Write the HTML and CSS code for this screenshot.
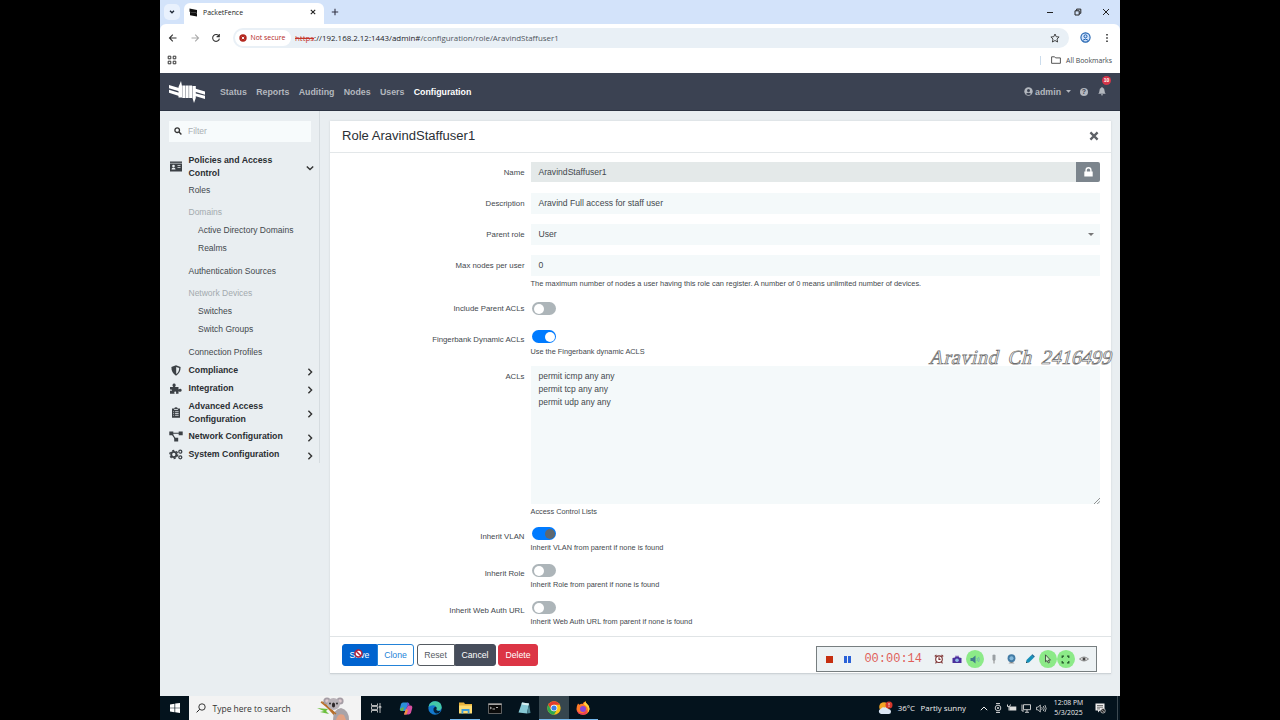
FILE: index.html
```html
<!DOCTYPE html>
<html lang="en">
<head>
  <meta charset="UTF-8">
  <meta name="viewport" content="width=device-width, initial-scale=1.0">
  <title>PacketFence</title>
  <link rel="stylesheet" href="styles.css">
</head>
<body>

<div class="screen">

  <!-- browser -->
  <div class="tabstrip">
    <div class="tab-search"><svg width="6" height="4" viewBox="0 0 6 4"><path d="M1 .8l2 2 2-2" fill="none" stroke="#1f2937" stroke-width="1.3"/></svg></div>
    <div class="tab">
      <svg width="9" height="9" viewBox="0 0 9 9"><path d="M.5.5L8 2v3L.5 3.8zM1 4l7 1.2v3.3L1 7.3z" fill="#111"/></svg>
      <span>PacketFence</span>
      <svg class="tab-close" width="6" height="6" viewBox="0 0 6 6"><path d="M.8.8l4.400 4.400M5.200.8L.8 5.200" stroke="#222" stroke-width="1.1"/></svg>
    </div>
    <svg class="new-tab" width="8" height="8" viewBox="0 0 8 8"><path d="M4 .8v6.400M.8 4h6.400" stroke="#334" stroke-width="1.1"/></svg>
    <div class="win-controls">
      <svg width="8" height="8" viewBox="0 0 8 8"><path d="M1 4.500h6" stroke="#222" stroke-width="1"/></svg>
      <svg width="8" height="8" viewBox="0 0 8 8"><path d="M1 2.800h4.200V7H1zM2.600 2.600V1.100h4.200v4.200H5.400" fill="none" stroke="#222" stroke-width="1"/></svg>
      <svg width="8" height="8" viewBox="0 0 8 8"><path d="M1 1l6 6M7 1L1 7" stroke="#222" stroke-width="1"/></svg>
    </div>
  </div>

  <div class="toolbar">
    <div class="nav-btns">
      <svg width="10" height="10" viewBox="0 0 10 10"><path d="M8.500 5h-7M4.800 1.700L1.500 5l3.300 3.300" fill="none" stroke="#333" stroke-width="1.1"/></svg>
      <svg width="10" height="10" viewBox="0 0 10 10"><path d="M1.500 5h7M5.200 1.700L8.500 5 5.200 8.300" fill="none" stroke="#aaa" stroke-width="1.1"/></svg>
      <svg width="10" height="10" viewBox="0 0 10 10"><path d="M8 3.200A3.400 3.400 0 1 0 8.400 5.600M8.300.9v2.700H5.600" fill="none" stroke="#333" stroke-width="1.1"/></svg>
    </div>
    <div class="omnibox">
      <div class="not-secure">
        <svg width="8" height="8" viewBox="0 0 8 8"><circle cx="4" cy="4" r="3.700" fill="#b3261e"/><path d="M2.800 2.800l2.400 2.400M5.200 2.800L2.800 5.200" stroke="#fff" stroke-width=".9"/></svg>
        <span>Not secure</span>
      </div>
      <div class="url"><s>https</s>://192.168.2.12:1443/admin#<span>/configuration/role/AravindStaffuser1</span></div>
      <svg class="star" width="10" height="10" viewBox="0 0 10 10"><path d="M5 1l1.200 2.700 2.900.3L7 6l.6 3L5 7.500 2.400 9 3 6 .9 4l2.900-.3z" fill="none" stroke="#333" stroke-width=".9"/></svg>
    </div>
    <svg class="profile" width="11" height="11" viewBox="0 0 11 11"><circle cx="5.500" cy="5.500" r="4.600" fill="#d3e3fb" stroke="#1b5fae" stroke-width="1.1"/><circle cx="5.500" cy="4.300" r="1.500" fill="none" stroke="#1b5fae"/><path d="M2.600 8.400q2.900-2.600 5.800 0" fill="none" stroke="#1b5fae"/></svg>
    <svg class="kebab" width="4" height="10" viewBox="0 0 4 10"><path d="M1.200 1h1.600v1.600H1.200zM1.200 4.200h1.600v1.600H1.200zM1.200 7.400h1.600V9H1.200z" fill="#333"/></svg>
  </div>

  <div class="bookmarks">
    <svg width="10" height="10" viewBox="0 0 10 10"><path d="M1.200 1.200h2.600v2.600H1.200zM6.200 1.200h2.600v2.600H6.200zM1.200 6.200h2.600v2.600H1.200zM6.200 6.200h2.600v2.600H6.200z" fill="none" stroke="#333"/></svg>
    <div class="all-bookmarks">
      <svg width="10" height="8" viewBox="0 0 10 8"><path d="M.6.8h3l1 1.100h4.800v5.400H.6z" fill="none" stroke="#444" stroke-width=".9"/></svg>
      <span>All Bookmarks</span>
    </div>
  </div>

  <!-- packetfence admin -->
  <nav class="navbar">
    <svg class="brand" width="36" height="22" viewBox="0 0 36 22">
      <path d="M0 4l10 3v3.300L0 7.300zM0 8.700l10 3V15L0 11.700zM26 7.500l10 3v3.300l-10-3zM26 12.300l10 2.500V18l-10-3z" fill="#fff"/>
      <path d="M12 0l1 5v11.500H9.500V6zM13.300 4.500h3v12.500h-3zM16.700 4.500h3v12.500h-3zM20.100 4.500h3v12.500h-3zM23.500 5h3.300v12L25 22l-1.500-5z" fill="#fff"/>
    </svg>
    <a href="#">Status</a>
    <a href="#">Reports</a>
    <a href="#">Auditing</a>
    <a href="#">Nodes</a>
    <a href="#">Users</a>
    <a href="#" class="active">Configuration</a>
    <div class="nav-right">
      <svg width="9" height="9" viewBox="0 0 9 9"><circle cx="4.500" cy="4.500" r="4.200" fill="#b3b7be"/><circle cx="4.500" cy="3.500" r="1.500" fill="#3b4252"/><path d="M1.900 7q2.600-2.700 5.200 0-2.600 1.900-5.200 0" fill="#3b4252"/></svg>
      <span class="user">admin</span>
      <svg class="caret" width="5" height="3" viewBox="0 0 5 3"><path d="M0 0h5L2.500 2.800z" fill="#b3b7be"/></svg>
      <div class="help-icon">?</div>
      <div class="bell">
        <svg width="8" height="9" viewBox="0 0 8 9"><path d="M4 0q.7 0 .7.8Q6.600 1.300 6.600 4q0 1.700 1.100 2.700H.3Q1.400 5.700 1.400 4q0-2.700 1.900-3.200Q3.300 0 4 0zM3 7.300h2Q4.900 8.500 4 8.500T3 7.300z" fill="#b3b7be"/></svg>
        <span class="count">10</span>
      </div>
    </div>
  </nav>

  <div class="page">
    <aside class="sidebar">
      <div class="filter">
        <svg width="8" height="8" viewBox="0 0 8 8"><circle cx="3.200" cy="3.200" r="2.300" fill="none" stroke="#333" stroke-width="1.3"/><path d="M5 5l2.400 2.400" stroke="#333" stroke-width="1.4"/></svg>
        <span>Filter</span>
      </div>
      <div class="section tall first">
        <svg class="icon" width="13" height="11" viewBox="0 0 13 11"><path d="M.5.5h12v10H.5z" fill="#3c4146"/><path d="M.5 2.300h12" stroke="#e9eef1" stroke-width=".6"/><circle cx="4" cy="5" r="1.300" fill="#e9eef1"/><path d="M2 8.500q0-2 2-2t2 2zM8 4.200h3v.9H8zM8 6.200h3v.9H8z" fill="#e9eef1"/></svg>
        <span>Policies and Access Control</span>
        <svg class="chev" width="8" height="8" viewBox="0 0 8 8"><path d="M.8 2.400L4 5.600l3.200-3.200" fill="none" stroke="#333" stroke-width="1.4"/></svg>
      </div>
      <div class="item roles">Roles</div>
      <div class="item muted">Domains</div>
      <div class="item sub">Active Directory Domains</div>
      <div class="item sub">Realms</div>
      <div class="item spaced">Authentication Sources</div>
      <div class="item muted">Network Devices</div>
      <div class="item sub">Switches</div>
      <div class="item sub">Switch Groups</div>
      <div class="item spaced">Connection Profiles</div>
      <div class="section">
        <svg class="icon" width="11" height="11" viewBox="0 0 11 11"><path d="M5.500.3l4.600 1.800Q10.200 8 5.500 10.700.8 8 .9 2.100z" fill="#3c4146"/><path d="M5.700 1.900l3 1.100Q8.700 7 5.700 9z" fill="#e9eef1"/></svg>
        <span>Compliance</span>
        <svg class="chev" width="8" height="8" viewBox="0 0 8 8"><path d="M2.400.8L5.600 4 2.400 7.200" fill="none" stroke="#333" stroke-width="1.4"/></svg>
      </div>
      <div class="section">
        <svg class="icon" width="13" height="11" viewBox="0 0 13 11"><path d="M.5 4h3.200Q2.900 2.900 3 2 3.300.6 4.600.6T6.200 2q.1.900-.7 2H9v2.400q1-.7 2-.6 1.200.2 1.200 1.500T11 8.800q-1 .1-2-.6v2.500H6.300Q7 9.500 6.500 8.800 5.800 8 5 8.800q-.6.7.2 1.900H.5V7.500q1.500.6 2-.3 0-1.100-2-.6z" fill="#3c4146"/></svg>
        <span>Integration</span>
        <svg class="chev" width="8" height="8" viewBox="0 0 8 8"><path d="M2.400.8L5.600 4 2.400 7.200" fill="none" stroke="#333" stroke-width="1.4"/></svg>
      </div>
      <div class="section tall">
        <svg class="icon" width="9" height="11" viewBox="0 0 9 11"><path d="M.5 1.500h2.300Q3 .2 4.500.2t1.700 1.300h2.300v9.200h-8z" fill="#3c4146"/><path d="M2.600 2.500h3.800M3.600 4.700h3.500M3.600 6.500h3.500M3.600 8.300h3.500M1.800 4.700h.8M1.800 6.500h.8M1.800 8.300h.8" stroke="#e9eef1" stroke-width=".8"/></svg>
        <span>Advanced Access Configuration</span>
        <svg class="chev" width="8" height="8" viewBox="0 0 8 8"><path d="M2.400.8L5.600 4 2.400 7.200" fill="none" stroke="#333" stroke-width="1.4"/></svg>
      </div>
      <div class="section">
        <svg class="icon" width="14" height="11" viewBox="0 0 14 11"><path d="M.3.5h4v3.700h-4zM9.700.5h4v3.700h-4zM5.200 6.800h4v3.700h-4z" fill="#3c4146"/><path d="M4 2.300h6M3.300 3.400l3 4.500" stroke="#3c4146" stroke-width="1.1"/></svg>
        <span>Network Configuration</span>
        <svg class="chev" width="8" height="8" viewBox="0 0 8 8"><path d="M2.400.8L5.600 4 2.400 7.200" fill="none" stroke="#333" stroke-width="1.4"/></svg>
      </div>
      <div class="section last">
        <svg class="icon" width="14" height="11" viewBox="0 0 14 11"><circle cx="4.800" cy="5.500" r="2.600" fill="none" stroke="#3c4146" stroke-width="1.9"/><circle cx="4.800" cy="5.500" r="4" fill="none" stroke="#3c4146" stroke-width="1.3" stroke-dasharray="2.1 2.09"/><circle cx="11.300" cy="2.700" r="1.500" fill="none" stroke="#3c4146" stroke-width="1.3"/><circle cx="11.300" cy="8.300" r="1.500" fill="none" stroke="#3c4146" stroke-width="1.3"/></svg>
        <span>System Configuration</span>
        <svg class="chev" width="8" height="8" viewBox="0 0 8 8"><path d="M2.400.8L5.600 4 2.400 7.200" fill="none" stroke="#333" stroke-width="1.4"/></svg>
      </div>
    </aside>

    <main class="card">
      <header class="card-header">
        <h1>Role AravindStaffuser1</h1>
        <svg width="10" height="10" viewBox="0 0 10 10"><path d="M1.400 1.400l7.200 7.200M8.600 1.400L1.400 8.600" stroke="#5d6166" stroke-width="2.3"/></svg>
      </header>

      <div class="card-body">
        <div class="row">
          <label>Name</label>
          <div class="field group">
            <div class="input disabled">AravindStaffuser1</div>
            <div class="lock"><svg width="9" height="10" viewBox="0 0 9 10"><path d="M.3 4.500h8.400v5H.3z" fill="#fff"/><path d="M2.100 5V3.200a2.400 2.400 0 0 1 4.800 0V5" fill="none" stroke="#fff" stroke-width="1.4"/></svg></div>
          </div>
        </div>
        <div class="row">
          <label>Description</label>
          <div class="field"><div class="input">Aravind Full access for staff user</div></div>
        </div>
        <div class="row">
          <label>Parent role</label>
          <div class="field"><div class="input select">User<svg width="6" height="3" viewBox="0 0 6 3"><path d="M0 0h6L3 3z" fill="#777"/></svg></div></div>
        </div>
        <div class="row max">
          <label>Max nodes per user</label>
          <div class="field">
            <div class="input">0</div>
            <small class="long">The maximum number of nodes a user having this role can register. A number of 0 means unlimited number of devices.</small>
          </div>
        </div>
        <div class="row include">
          <label>Include Parent ACLs</label>
          <div class="field"><div class="toggle"></div></div>
        </div>
        <div class="row toggles">
          <label>Fingerbank Dynamic ACLs</label>
          <div class="field"><div class="toggle on"></div><small>Use the Fingerbank dynamic ACLS</small></div>
        </div>
        <div class="row acls">
          <label>ACLs</label>
          <div class="field">
            <div class="textarea">permit icmp any any<br>permit tcp any any<br>permit udp any any
              <svg class="grip" width="6" height="6" viewBox="0 0 6 6"><path d="M0 6l6-6M3.200 6L6 3.200" stroke="#777" stroke-width=".8"/></svg>
            </div>
            <small>Access Control Lists</small>
          </div>
        </div>
        <div class="row toggles">
          <label>Inherit VLAN</label>
          <div class="field"><div class="toggle on dark"></div><small>Inherit VLAN from parent if none is found</small></div>
        </div>
        <div class="row toggles">
          <label>Inherit Role</label>
          <div class="field"><div class="toggle"></div><small>Inherit Role from parent if none is found</small></div>
        </div>
        <div class="row toggles">
          <label>Inherit Web Auth URL</label>
          <div class="field"><div class="toggle"></div><small>Inherit Web Auth URL from parent if none is found</small></div>
        </div>
      </div>

      <footer class="card-footer">
        <div class="btn-group">
          <div class="btn save">Save
            <svg class="cursor" width="9" height="9" viewBox="0 0 9 9"><circle cx="4.500" cy="4.500" r="3.500" fill="#fff" stroke="#b3223a" stroke-width="1.5"/><path d="M2 2l5 5" stroke="#b3223a" stroke-width="1.5"/></svg>
          </div>
          <div class="btn clone">Clone</div>
        </div>
        <div class="btn-group">
          <div class="btn reset">Reset</div>
          <div class="btn cancel">Cancel</div>
        </div>
        <div class="btn delete">Delete</div>
      </footer>
    </main>
  </div>

  <!-- windows taskbar -->
  <div class="taskbar">
    <div class="start"><svg width="10" height="10" viewBox="0 0 10 10"><path d="M0 1.400l4.500-.7v4H0zM5.200.6L10 0v4.700H5.200zM0 5.300h4.500v4L0 8.600zM5.200 5.300H10V10l-4.800-.7z" fill="#fff"/></svg></div>
    <div class="search">
      <svg width="10" height="10" viewBox="0 0 10 10"><circle cx="6" cy="4" r="3.200" fill="none" stroke="#222" stroke-width=".9"/><path d="M3.700 6.300L.6 9.400" stroke="#222"/></svg>
      <span>Type here to search</span>
      <svg class="koala" width="36" height="24" viewBox="0 0 36 24">
        <path d="M1 12l11 1-2 2 3 3-9-2 4-1z" fill="#6cbf3d"/>
        <path d="M5 5l3 1 18 17-4 1z" fill="#b8702a"/>
        <path d="M17 24q0-11 8-12 8 2 8 12z" fill="#a9a3a8"/><path d="M20 24q2-8 8-5l2 5z" fill="#e2a183"/>
        <circle cx="11" cy="5" r="3.600" fill="#a59da5"/><circle cx="24" cy="5" r="3.600" fill="#a59da5"/><circle cx="11" cy="5" r="1.800" fill="#ddc9cd"/><circle cx="24" cy="5" r="1.800" fill="#ddc9cd"/>
        <ellipse cx="17.500" cy="8" rx="6.500" ry="6" fill="#b9b2b8"/><ellipse cx="17.500" cy="9" rx="1.600" ry="2.500" fill="#2c2628"/><circle cx="14" cy="7.500" r=".9" fill="#222"/><circle cx="21" cy="7.500" r=".9" fill="#222"/>
        <path d="M5 6l15 12" stroke="#b8702a" stroke-width="1.5"/>
      </svg>
    </div>
    <div class="apps">
      <div class="app"><svg width="11" height="10" viewBox="0 0 11 10"><path d="M.5.5v2h6v-2M.5 9.500v-2h6v2M.5 3.600h6v2.800h-6zM9 0v3M9 5v5M8 3.500h2v1.200H8z" fill="none" stroke="#ccc" stroke-width=".9"/></svg></div>
      <div class="app"><svg width="14" height="13" viewBox="0 0 14 13"><path d="M4 .5h5L7 9H3Q0 9 1 6l1-4Q2.500.5 4 .5z" fill="#2b8fd8"/><path d="M1.300 6.500L5 5 4 9H3Q.8 9 1.300 6.500z" fill="#63b544"/><path d="M9 3.500h2.500Q14 3.500 13 7l-1 3.500q-.7 2-2.500 2H5L7 7z" fill="#d64fa0"/><path d="M5 12.500L7 7l2 1-1.500 4.500z" fill="#f0903c"/><path d="M8.500.5q2 0 2 3H9L7.500 7z" fill="#7053d8"/></svg></div>
      <div class="app"><svg width="14" height="14" viewBox="0 0 14 14"><circle cx="7" cy="7" r="6.700" fill="#1379ce"/><path d="M.5 6Q1.500.3 7.500.3q6 .5 6.200 6.200-.4 3-4.200 3-2-.2-1-1.800Q8.500 4.500 5 4.300 2 4.300.5 6z" fill="#43c8a7"/><path d="M5.500 7.500q2-3 3.300-.5Q7.500 9 9.500 9.800t3.500-.6Q11 13 8 12.500 5 11 5.500 7.500z" fill="#06213a"/></svg></div>
      <div class="app open"><svg width="13" height="12" viewBox="0 0 13 12"><path d="M0 .5h5l1 1.500h7v9H0z" fill="#e8b23c"/><path d="M0 3.500h13v8H0z" fill="#ffdc72"/><path d="M2.500 11.500V7h8v4.500H8.700V9H4.300v2.500z" fill="#3d9bd8"/></svg></div>
      <div class="app"><svg width="14" height="11" viewBox="0 0 14 11"><path d="M.5.5h13v10H.5z" fill="#0a0a0a" stroke="#777" stroke-width=".8"/><path d="M.5 1.300h13" stroke="#ccc"/><path d="M2 4l1.500 1L2 6M4.500 6H7M8 4.500h2" stroke="#ddd" stroke-width=".8" fill="none"/></svg></div>
      <div class="app"><svg width="13" height="13" viewBox="0 0 13 13"><path d="M4 .5l7 1-2 10-8.500-1z" fill="#86c8d4"/><path d="M11 1.500l1.500 9.500-3.500.5z" fill="#4c8794"/><path d="M4 .5l7 1-.5 2-7-1z" fill="#d8eef0"/></svg></div>
      <div class="app open current"><svg width="14" height="14" viewBox="0 0 14 14"><circle cx="7" cy="7" r="6.700" fill="#fbc116"/><path d="M1.200 3.650A6.700 6.700 0 0 1 12.800 3.650H7A3.350 3.350 0 0 0 4 8.500z" fill="#e33b2e"/><path d="M1.200 3.650L4.100 8.700A3.350 3.350 0 0 0 9.900 8.700L7 13.700A6.700 6.700 0 0 1 1.200 3.650z" fill="#2da94f"/><circle cx="7" cy="7" r="3.300" fill="#fff"/><circle cx="7" cy="7" r="2.600" fill="#3b7de8"/></svg></div>
      <div class="app open"><svg width="14" height="14" viewBox="0 0 14 14"><path d="M2 2.500l1.500 1.300Q5 2.500 6.500 3 7 1.200 9.500.3q0 1.700 1.800 3Q13.700 5 13.500 8q-.7 5.700-6.500 5.800Q1 13.500.5 8 .5 5 2 2.500z" fill="#ff7a28"/><path d="M9.500.3q0 1.700 1.800 3Q13.700 5 13.500 8q-.3 2-1.500 3.500Q13 6 8 3.500 8 1.500 9.500.3z" fill="#ffd23c"/><circle cx="7" cy="8" r="3" fill="#8846d8"/><path d="M.5 8q2 5 7 3.800 2.500-.8 3-3Q12 13.500 7 13.800 1 13.500.5 8z" fill="#ef3b5d"/></svg></div>
    </div>
    <div class="tray">
      <svg class="weather" width="15" height="14" viewBox="0 0 15 14"><circle cx="6" cy="6" r="4.800" fill="#f6a623"/><path d="M3 13a2.700 2.700 0 0 1 0-5.300Q4 5.500 6.500 6.500 9 5.500 10 8q3 .3 3 2.700T10.500 13z" fill="#dbe7f5"/><circle cx="11" cy="4" r="3.500" fill="#d6382b"/><path d="M11 2v2.500M11 5.200v.8" stroke="#fff" stroke-width=".8"/></svg>
      <span class="temp">36°C</span><span class="sky">Partly sunny</span>
      <svg class="up" width="8" height="5" viewBox="0 0 8 5"><path d="M.8 4.200L4 1l3.200 3.200" fill="none" stroke="#eee"/></svg>
      <svg width="8" height="10" viewBox="0 0 8 10"><path d="M2 .6h4M2 9.400h4" stroke="#ddd"/><circle cx="4" cy="5" r="2.800" fill="none" stroke="#ddd" stroke-width=".9"/><circle cx="4" cy="5" r="1" fill="#ddd"/></svg>
      <svg width="10" height="8" viewBox="0 0 10 8"><path d="M2.500 2.500h6.800v4H2.500z" fill="#ddd"/><path d="M.5.5v2q2.500 1.500 3-2M2 3v3.500" stroke="#ddd" fill="none"/></svg>
      <svg width="10" height="9" viewBox="0 0 10 9"><path d="M2.500.7h7v5h-7zM1 .5V7h2M6 5.700V8M4 8.300h4" fill="none" stroke="#ddd" stroke-width=".9"/></svg>
      <svg width="11" height="9" viewBox="0 0 11 9"><path d="M.5 3.200H2L4.300 1v7L2 5.800H.5z" fill="none" stroke="#ddd" stroke-width=".8"/><path d="M5.700 3.200q1 1.300 0 2.600M7.300 2q1.800 2.500 0 5M8.900 1q2.500 3.500 0 7" fill="none" stroke="#ddd" stroke-width=".8"/></svg>
      <div class="clock">12:08 PM<br>5/3/2025</div>
      <svg class="notif" width="11" height="11" viewBox="0 0 11 11"><path d="M.5.5h9v7H5L3 9.500v-2H.5z" fill="#eee"/><path d="M2 2.500h6M2 4.200h6M2 5.900h3" stroke="#222" stroke-width=".6"/><circle cx="8" cy="7.800" r="2.300" fill="#222" stroke="#eee" stroke-width=".6"/><path d="M6.500 6.300l3 3" stroke="#eee" stroke-width=".6"/></svg>
      <div class="peek"></div>
    </div>
  </div>

  <!-- screen recorder overlay -->
  <div class="recorder">
    <div class="cell"><svg width="7" height="7"><path d="M0 0h7v7H0z" fill="#c62f10"/></svg></div>
    <div class="cell pause"><svg width="7" height="7"><path d="M0 0h3v7H0zM4 0h3v7H4z" fill="#2b62d8"/></svg></div>
    <div class="timer">00:00:14</div>
    <div class="cell"><svg width="10" height="10" viewBox="0 0 10 10"><circle cx="5" cy="5.200" r="3.300" fill="#fff" stroke="#7b3030" stroke-width="1.1"/><path d="M5 3.200v2.200h1.600M.8 2.500L2.500.8M9.200 2.500L7.500.8M2.500 8l-1 1.300M7.500 8l1 1.300" fill="none" stroke="#7b3030" stroke-width="1.1"/></svg></div>
    <div class="cell"><svg width="10" height="9" viewBox="0 0 10 9"><path d="M.5 3L3 2.500 3.800 1h2.700l.7 1.500L9.500 3v5h-9z" fill="#4b2f9b"/><path d="M3 1.200h4" stroke="#9b83c8"/><circle cx="5" cy="5.300" r="1.800" fill="#8fb7e8"/></svg></div>
    <div class="cell green"><svg width="10" height="9" viewBox="0 0 10 9"><path d="M.5 3h2L5.500.5v8L2.500 6h-2z" fill="#427b8b"/><path d="M7 3q1 1.500 0 3M8.500 2q1.500 2.500 0 5" fill="none" stroke="#6aa9b8" stroke-width=".8"/></svg></div>
    <div class="cell"><svg width="6" height="10" viewBox="0 0 6 10"><path d="M1.500 1q1.500-1.200 3 0v5q-1.500 1-3 0z" fill="#999fa3"/><path d="M3 6v3.500" stroke="#888"/></svg></div>
    <div class="cell"><svg width="9" height="10" viewBox="0 0 9 10"><circle cx="4.500" cy="4.200" r="3.900" fill="#427ba5"/><circle cx="4.500" cy="4.200" r="2" fill="#83b8da"/><path d="M1.500 9.200q3-2 6 0z" fill="#555"/></svg></div>
    <div class="cell"><svg width="10" height="10" viewBox="0 0 10 10"><path d="M1 9l.5-3L6.500 1 9 3.500l-5 5z" fill="#168fb8"/><path d="M6.500 1l1-.8 2.300 2.300L9 3.500z" fill="#125d8c"/><path d="M1 9l.3-1.600L2.600 8.700z" fill="#333"/></svg></div>
    <div class="cell green"><svg width="8" height="10" viewBox="0 0 8 10"><path d="M1.500.8v7l1.600-1.300L4.300 9l1.200-.6-1.100-2.300h2.100z" fill="#c9f5c4" stroke="#333" stroke-width=".8"/></svg></div>
    <div class="cell green"><svg width="9" height="9" viewBox="0 0 9 9"><path d="M3 1.200H1.200V3M6 1.200h1.800V3M1.200 6v1.800H3M7.800 6v1.800H6" fill="none" stroke="#23552a" stroke-width="1.2"/></svg></div>
    <div class="cell"><svg width="10" height="8" viewBox="0 0 10 8"><path d="M.5 4q4.500-4 9 0-4.500 4-9 0z" fill="#ddd" stroke="#777" stroke-width=".8"/><circle cx="5" cy="4" r="1.500" fill="#444"/></svg></div>
  </div>

  <div class="watermark"><span>Aravind</span> <span>Ch</span> <b>2416499</b></div>
</div>

</body>
</html>
```

FILE: styles.css
```css
* {
  box-sizing: border-box;
}
body {
  margin: 0;
  background: #000;
  font-family: "Liberation Sans", Arial, sans-serif;
  color: #43484d;
}
svg {
  display: block;
  flex: none;
}
.screen {
  position: relative;
  width: 960px;
  height: 720px;
  margin: 0 auto;
  display: flex;
  flex-direction: column;
  overflow: hidden;
  background: #e9eef1;
}

/* browser chrome */
.tabstrip {
  height: 24px;
  display: flex;
  align-items: center;
  background: #d3e3fa;
  font-family: "Open Sans", sans-serif;
}
.tab-search {
  width: 16px;
  height: 16px;
  margin-left: 4px;
  border-radius: 5px;
  background: #e9f1fd;
  display: flex;
  align-items: center;
  justify-content: center;
}
.tab {
  width: 140px;
  height: 21px;
  margin: 3px 0 0 4px;
  padding: 0 8px 3px 5px;
  border-radius: 6px 6px 0 0;
  background: #fff;
  display: flex;
  align-items: center;
  font-size: 6.9px;
  color: #222;
}
.tab span {
  margin-left: 5px;
}
.tab-close {
  margin-left: auto;
}
.new-tab {
  margin-left: 7px;
}
.win-controls {
  margin-left: auto;
  padding-right: 10px;
  display: flex;
  gap: 20px;
}
.toolbar {
  height: 24px;
  display: flex;
  align-items: center;
  background: #fff;
  border-radius: 6px 6px 0 0;
  padding: 3px 11px 0 8px;
  box-shadow: 0 -6px 0 #d3e3fa;
  font-family: "Open Sans", sans-serif;
}
.tabstrip {
  position: relative;
  z-index: 1;
}
.nav-btns {
  display: flex;
  gap: 11.5px;
  width: 65px;
}
.omnibox {
  width: 836px;
  height: 20px;
  border-radius: 10px;
  background: #e9f0f6;
  display: flex;
  align-items: center;
  padding: 0 9px 0 2px;
}
.not-secure {
  width: 56px;
  height: 16px;
  border-radius: 8px;
  background: #fff;
  display: flex;
  align-items: center;
  gap: 3.5px;
  padding-left: 4px;
  color: #b3261e;
  font-size: 6.9px;
  white-space: nowrap;
}
.url {
  margin-left: 4px;
  font-size: 7.91px;
  color: #1f2328;
  white-space: nowrap;
}
.url s {
  color: #c5352b;
}
.url span {
  color: #50575e;
}
.star {
  margin-left: auto;
}
.profile {
  margin-left: 11px;
}
.kebab {
  margin-left: auto;
}
.bookmarks {
  height: 25px;
  background: #fff;
  display: flex;
  align-items: center;
  justify-content: space-between;
  padding: 0 8px 1px 7px;
  font: 6.9px "Open Sans", sans-serif;
}
.all-bookmarks {
  display: flex;
  align-items: center;
  gap: 5px;
  padding-left: 10px;
  border-left: 1px solid #cbdcec;
}

/* top navigation */
.navbar {
  height: 38px;
  flex: none;
  background: #3b4252;
  border-bottom: 1px solid #2c3342;
  display: flex;
  align-items: center;
  padding: 0 14px 0 9px;
  font-size: 8.8px;
  font-weight: bold;
}
.navbar .brand {
  margin-right: 15px;
}
.navbar a {
  color: #b3b7be;
  text-decoration: none;
  margin-right: 9.3px;
}
.navbar a.active {
  color: #fff;
}
.nav-right {
  margin-left: auto;
  display: flex;
  align-items: center;
  color: #b3b7be;
}
.user {
  margin-left: 2.5px;
}
.caret {
  margin: 0 9px 0 5px;
}
.help-icon {
  width: 8px;
  height: 8px;
  line-height: 8px;
  border-radius: 50%;
  background: #b3b7be;
  color: #3b4252;
  font-size: 7px;
  text-align: center;
  margin-right: 10px;
}
.bell {
  position: relative;
}
.count {
  position: absolute;
  left: 4px;
  top: -11px;
  width: 9px;
  height: 9px;
  border-radius: 50%;
  background: #d63649;
  color: #fff;
  font-size: 5px;
  line-height: 9px;
  text-align: center;
}

.page {
  flex: 1;
  display: flex;
  align-items: flex-start;
}

/* sidebar */
.sidebar {
  width: 160px;
  height: 352px;
  border-right: 1px solid #d6dce0;
  font-size: 8.5px;
}
.filter {
  width: 142px;
  height: 21px;
  margin: 10px 0 0 9px;
  padding: 0 0 1px 5px;
  background: #f7fbfc;
  display: flex;
  align-items: center;
  gap: 6px;
  color: #a9afb3;
}
.section {
  height: 18px;
  display: flex;
  align-items: center;
  padding: 0 6px 0 9px;
  font-size: 8.75px;
  font-weight: bold;
  line-height: 12.5px;
  color: #2b2f33;
}
.section .icon {
  width: 14px;
  margin-right: 5.5px;
}
.section span {
  width: 105px;
  white-space: nowrap;
}
.section .chev {
  margin: 3px -1px 0 auto;
}
.section.tall {
  height: 25px;
  margin: 2.5px 0;
}
.section.tall span {
  width: 90px;
  white-space: normal;
}
.section.first {
  margin-top: 12px;
}
.item {
  height: 18px;
  line-height: 17px;
  padding-left: 28.5px;
}
.item.muted {
  margin-top: 4.5px;
  color: #a3aaae;
}
.item.sub {
  padding-left: 38px;
}
.item.spaced {
  margin-top: 4.5px;
}

/* role form */
.card {
  width: 781px;
  margin: 10px 0 0 10px;
  background: #fff;
  border-bottom: 1px solid #cdd3d7;
  box-shadow: 0 0 2px #ccd3d7;
}
.card-header {
  height: 32px;
  border-bottom: 1px solid #e3e7e9;
  display: flex;
  align-items: center;
  justify-content: space-between;
  padding: 0 12px 2px;
}
.card-header h1 {
  margin: 0;
  font-size: 13.05px;
  font-weight: normal;
  color: #2b3035;
}
.card-body {
  height: 483px;
  padding: 9px 11px 0 0;
}
.row {
  height: 31px;
  display: flex;
}
.row label {
  width: 194.5px;
  margin-right: 6.5px;
  line-height: 21px;
  text-align: right;
  font-size: 7.8px;
}
.field {
  flex: 1;
}
.group {
  display: flex;
}
.input {
  flex: 1;
  height: 21px;
  line-height: 21px;
  padding: 0 7.5px;
  background: #f4f9fa;
  font-size: 8.6px;
}
.input.disabled {
  height: 20px;
  line-height: 20px;
  background: #e4e9e9;
}
.input.select {
  display: flex;
  align-items: center;
  justify-content: space-between;
  padding-right: 6px;
}
.lock {
  width: 24px;
  height: 20px;
  background: #7c858d;
  border-radius: 0 2px 2px 0;
  display: flex;
  align-items: center;
  justify-content: center;
}
small {
  display: block;
  font-size: 7.33px;
  line-height: 10px;
  margin: 3px 0 0 -0.5px;
  white-space: nowrap;
}
small.long {
  font-size: 7.43px;
}
.row.max {
  height: 46px;
}
.row.include {
  height: 28px;
}
.row.include label {
  line-height: 15px;
}
.row.toggles {
  height: 37px;
}
.row.include + .toggles {
  height: 37px;
}
.row.include + .toggles small {
  margin-top: 4px;
}
.row.acls {
  height: 160px;
}
.row.acls small {
  margin-top: 3px;
}
.toggle {
  width: 24px;
  height: 13px;
  margin: 1px 0 0 1px;
  border-radius: 7px;
  background: #adb5b9;
  padding: 1.5px;
}
.toggle::before {
  content: "";
  display: block;
  width: 10px;
  height: 10px;
  border-radius: 50%;
  background: #fff;
}
.toggle.on {
  background: #007bff;
}
.toggle.on::before {
  margin-left: auto;
}
.toggle.dark::before {
  background: #5f6870;
}
.textarea {
  position: relative;
  height: 138px;
  padding: 4px 7.5px;
  background: #f4f9fa;
  font-size: 8.5px;
  line-height: 13px;
}
.grip {
  position: absolute;
  right: 0;
  bottom: 0;
}
.card-footer {
  height: 37px;
  border-top: 1px solid #e0e4e6;
  display: flex;
  align-items: center;
  gap: 2.5px;
  padding-left: 12px;
}
.btn-group {
  display: flex;
}
.btn {
  height: 22px;
  line-height: 20px;
  border: 1px solid;
  border-radius: 3px;
  text-align: center;
  font-size: 8.7px;
}
.save {
  position: relative;
  width: 35px;
  border-radius: 3px 0 0 3px;
  background: #0063cf;
  border-color: #0063cf;
  color: #fff;
}
.cursor {
  position: absolute;
  left: 11px;
  top: 4px;
}
.clone {
  width: 37px;
  border-radius: 0 3px 3px 0;
  color: #2383d8;
  border-color: #2383d8;
}
.reset {
  width: 38px;
  border-radius: 3px 0 0 3px;
  color: #555b62;
  border-color: #555b62;
}
.cancel {
  width: 41px;
  border-radius: 0 3px 3px 0;
  background: #464d5b;
  border-color: #464d5b;
  color: #fff;
}
.delete {
  width: 40px;
  background: #dc3545;
  border-color: #dc3545;
  color: #fff;
}

/* taskbar */
.taskbar {
  height: 24px;
  flex: none;
  display: flex;
  background: #04131d;
  color: #eee;
  font-family: "Open Sans", sans-serif;
}
.start {
  width: 29px;
  display: flex;
  align-items: center;
  justify-content: center;
}
.search {
  width: 172px;
  background: #f3f3f3;
  display: flex;
  align-items: center;
  padding-left: 7px;
  color: #333;
  font-size: 8.5px;
}
.search span {
  margin-left: 6.5px;
}
.koala {
  margin-left: auto;
  margin-right: 9px;
}
.apps {
  display: flex;
  margin-left: 0.5px;
}
.app {
  width: 29.6px;
  display: flex;
  align-items: center;
  justify-content: center;
}
.app.open {
  border-bottom: 1px solid #76b9ed;
}
.app.current {
  background: #36464e;
}
.tray {
  margin-left: auto;
  padding-right: 2px;
  display: flex;
  align-items: center;
  gap: 4.5px;
  font-size: 7.9px;
}
.sky {
  margin-left: 1px;
}
.up {
  margin: 0 2px 0 9px;
}
.clock {
  width: 35px;
  font-size: 6.8px;
  line-height: 10.5px;
  text-align: center;
}
.notif {
  margin-left: 4px;
}
.peek {
  width: 1px;
  height: 24px;
  margin-left: 7px;
  background: #3d4a52;
}

/* overlays */
.recorder {
  position: absolute;
  left: 656px;
  top: 646px;
  width: 281px;
  height: 26px;
  padding-left: 3px;
  background: #edf2f4;
  border: 1px solid #777e80;
  display: flex;
  align-items: center;
}
.cell {
  width: 18.1px;
  height: 18px;
  display: flex;
  align-items: center;
  justify-content: center;
}
.cell.green {
  border-radius: 50%;
  background: #8cea88;
}
.timer {
  width: 74px;
  text-align: center;
  font: 12px "Liberation Mono", monospace;
  color: #e0605a;
}
.watermark {
  position: absolute;
  left: 770px;
  top: 346px;
  font: 20px/23px "Liberation Serif", serif;
  letter-spacing: 0.6px;
  word-spacing: 3.4px;
  white-space: nowrap;
  color: #f4f6f6;
  -webkit-text-stroke: 0.7px #6c6c6c;
  transform: skewX(-14deg);
}
.watermark b {
  font-weight: normal;
  letter-spacing: 0;
}
```
